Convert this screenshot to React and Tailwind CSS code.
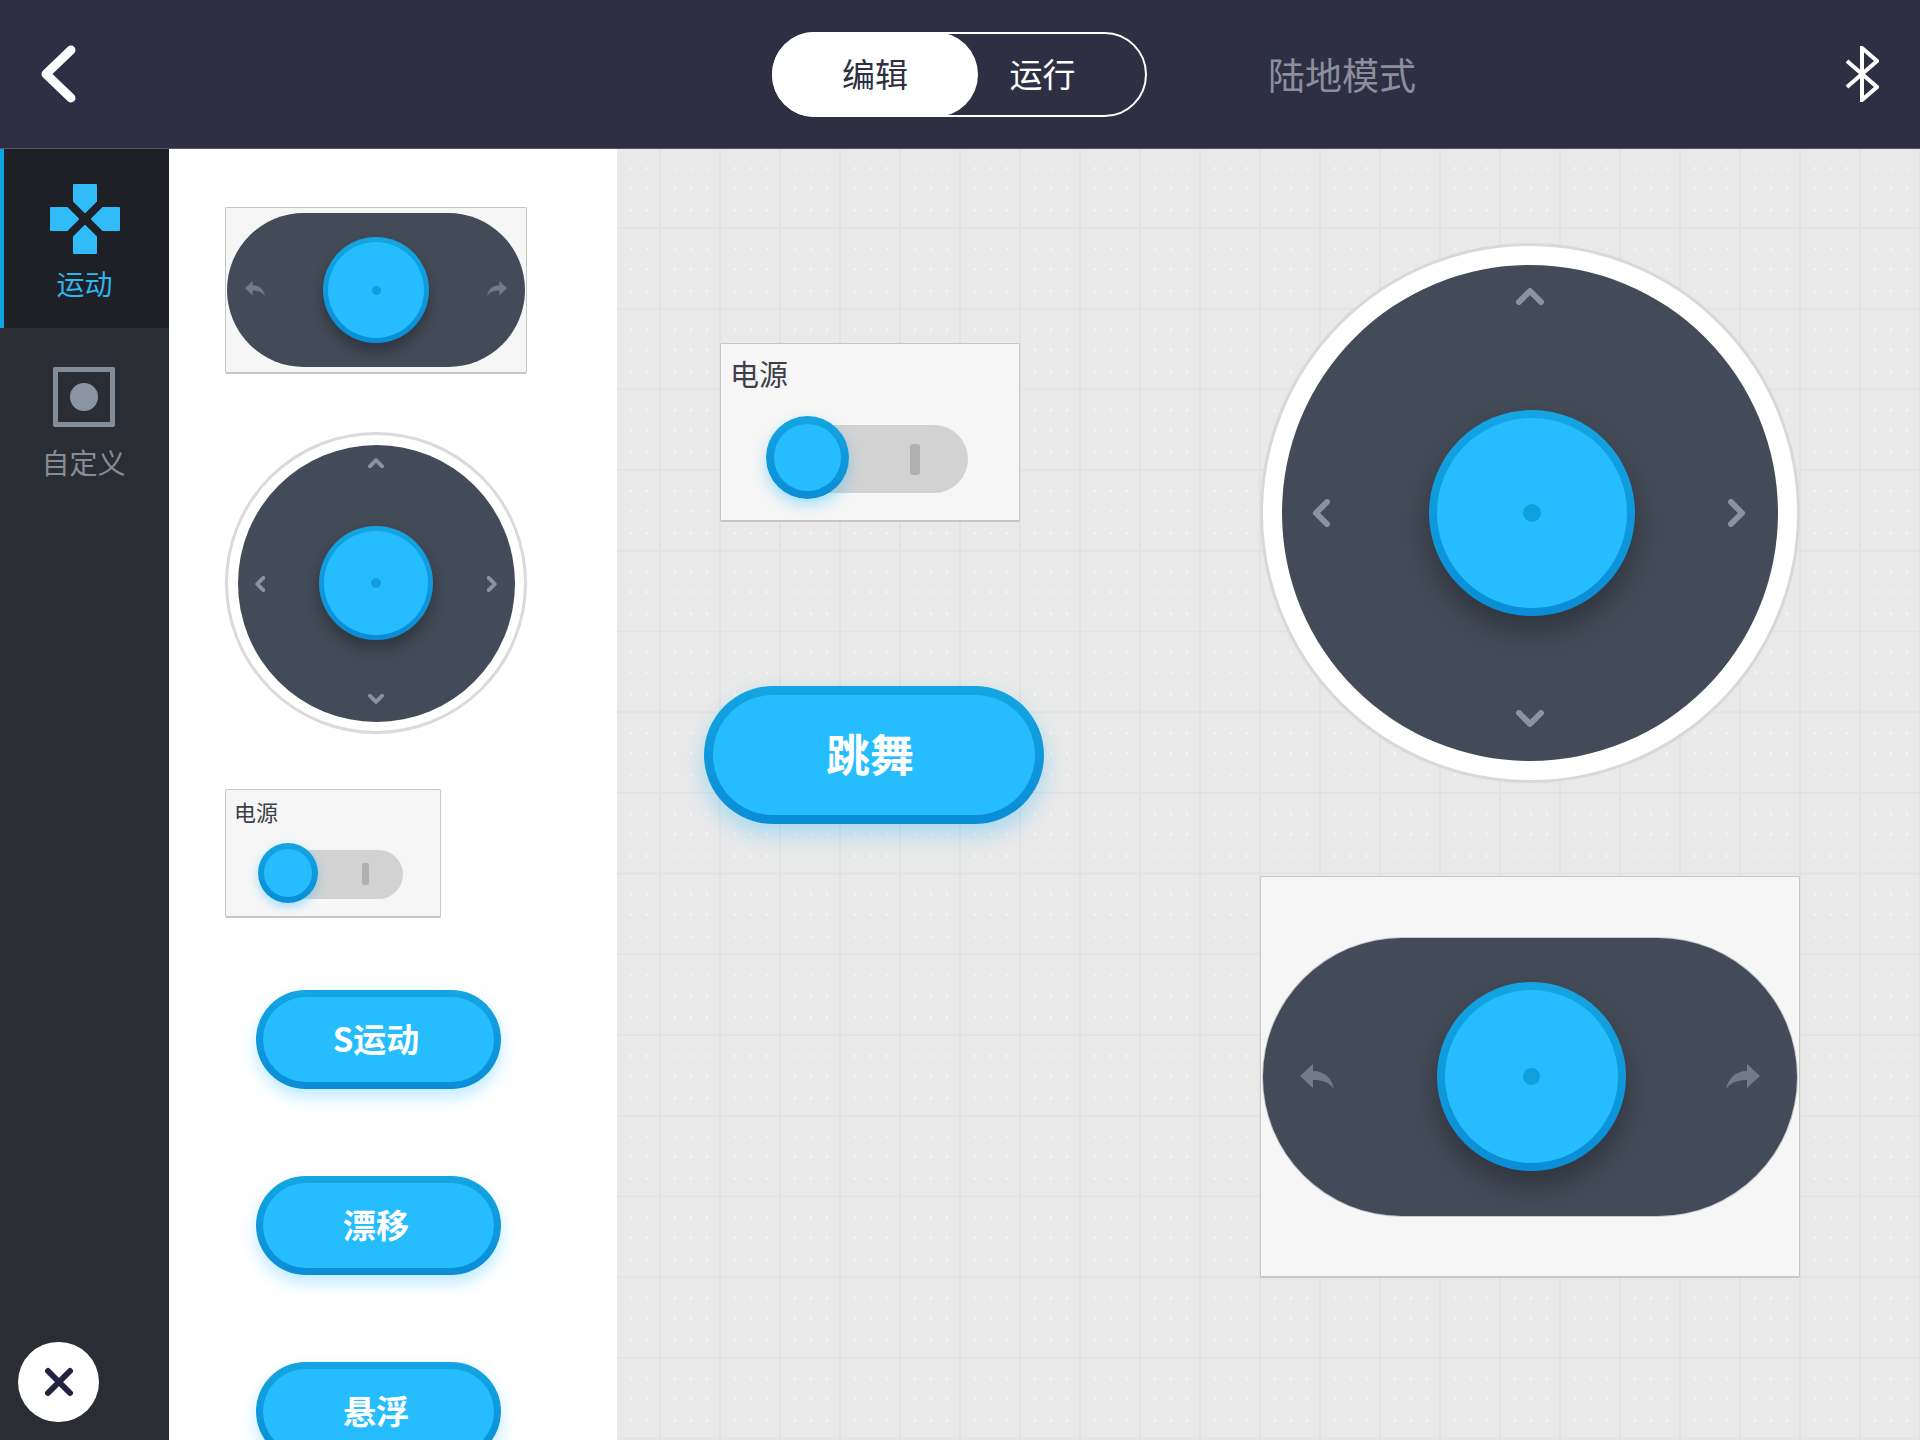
import { useId } from "react";

function Chevron({ dir, className, weight = "6" }) {
  const points = {
    up: "3,15 14,4 25,15",
    down: "3,3 14,14 25,3",
    left: "15,3 4,14 15,25",
    right: "3,3 14,14 3,25",
  };
  const box = dir === "up" || dir === "down" ? "0 0 28 18" : "0 0 18 28";
  return (
    <svg viewBox={box} className={className} fill="none" stroke="#8a93a1" strokeWidth={weight} strokeLinecap="round" strokeLinejoin="round">
      <polyline points={points[dir]} />
    </svg>
  );
}

function TurnArrow({ className }) {
  return (
    <svg viewBox="0 0 34 25" className={className} fill="#737b87">
      <path d="M0 12 L13 0 V7 C25 7 32 15 34 25 C29 18 22 16 13 16 V24 Z" />
    </svg>
  );
}

function Knob({ sizeClass, paddingClass, dotClass, shadowClass }) {
  return (
    <div className={`rounded-full bg-linear-to-b from-[#14a5e2] to-[#0a8dd6] ${sizeClass} ${paddingClass} ${shadowClass}`}>
      <div className="flex h-full w-full items-center justify-center rounded-full bg-[#26bdff]">
        {dotClass && <div className={`rounded-full bg-[#12a0dc] ${dotClass}`} />}
      </div>
    </div>
  );
}

function SmallPill() {
  return (
    <div className="flex h-[167px] w-[302px] shrink-0 items-center justify-center rounded-[2px] border border-b-2 border-[#c6c6c6] bg-[#f6f6f6]">
      <div className="relative flex h-[154px] w-[298px] items-center justify-center rounded-full bg-[#434b58]">
        <TurnArrow className="absolute left-[18px] top-[68px] h-[15px] w-[20px]" />
        <TurnArrow className="absolute right-[18px] top-[68px] h-[15px] w-[20px] -scale-x-100" />
        <Knob sizeClass="h-[106px] w-[106px]" paddingClass="p-[5px]" dotClass="h-[9px] w-[9px]" shadowClass="shadow-[0_8px_14px_rgba(0,0,0,0.3)]" />
      </div>
    </div>
  );
}

function SmallStick() {
  return (
    <div className="mt-[58px] flex h-[302px] w-[302px] shrink-0 items-center justify-center rounded-full border-[3px] border-[#dadadc] bg-white">
      <div className="relative flex h-[277px] w-[277px] items-center justify-center rounded-full bg-[#434b58]">
        <Chevron dir="up" weight="7" className="absolute left-[130px] top-[13px] h-[10px] w-[16px]" />
        <Chevron dir="down" weight="7" className="absolute bottom-[18px] left-[130px] h-[10px] w-[16px]" />
        <Chevron dir="left" weight="7" className="absolute left-[17px] top-[131px] h-[16px] w-[10px]" />
        <Chevron dir="right" weight="7" className="absolute right-[18px] top-[131px] h-[16px] w-[10px]" />
        <Knob sizeClass="h-[114px] w-[114px]" paddingClass="p-[5px]" dotClass="h-[10px] w-[10px]" shadowClass="shadow-[0_8px_16px_rgba(0,0,0,0.3)]" />
      </div>
    </div>
  );
}

function SmallSwitch() {
  return (
    <div className="mt-[55px] h-[129px] w-[216px] shrink-0 rounded-[2px] border border-b-2 border-[#c6c6c6] bg-[#f6f6f6] pl-[8px] pt-[8px]">
      <div className="text-[22px] leading-[26px] text-[#3b4048]">电源</div>
      <div className="ml-[24px] mt-[19px] flex items-center">
        <div className="relative z-10">
          <Knob sizeClass="h-[60px] w-[60px]" paddingClass="p-[6px]" shadowClass="shadow-[0_4px_10px_rgba(38,189,255,0.4)]" />
        </div>
        <div className="-ml-[40px] mt-[2px] flex h-[49px] w-[125px] items-center justify-end rounded-r-full bg-[#d2d2d2] pr-[34px]">
          <div className="h-[22px] w-[7px] rounded-[2px] bg-[#b0b0b0]" />
        </div>
      </div>
    </div>
  );
}

function PillButton({ label }) {
  return (
    <div className="ml-[31px] h-[99px] w-[245px] shrink-0 rounded-full bg-linear-to-b from-[#14a5e2] to-[#0a8dd6] p-[7px] shadow-[0_8px_16px_rgba(38,189,255,0.3)]">
      <div className="flex h-full w-full items-center justify-center rounded-full bg-[#26bdff] pb-[2px] pr-[5px] text-[33px] font-bold text-white">
        {label}
      </div>
    </div>
  );
}

function GridBackground() {
  const id = useId();
  return (
    <svg className="absolute inset-0 h-full w-full">
      <defs>
        <pattern id={id} x="43" y="79" width="60" height="80.7" patternUnits="userSpaceOnUse">
          <rect x="-1" y="0" width="2" height="80.7" fill="#e2e2e2" />
          <rect x="59" y="0" width="2" height="80.7" fill="#e2e2e2" />
          <rect x="0" y="-1" width="60" height="2" fill="#e2e2e2" />
          <rect x="0" y="79.7" width="60" height="2" fill="#e2e2e2" />
          {[15, 31, 47].map((x) =>
            [21, 41, 63].map((y) => <circle key={`${x}-${y}`} cx={x} cy={y} r="1.5" fill="#f3f3f3" />)
          )}
        </pattern>
      </defs>
      <rect width="100%" height="100%" fill={`url(#${id})`} />
    </svg>
  );
}

function DPad() {
  const arm = "-11,-34 11,-34 11,-18 0,-7 -11,-18";
  return (
    <svg viewBox="-36 -36 72 72" className="h-[72px] w-[72px]" fill="#2fbcf8" stroke="#2fbcf8" strokeWidth="2" strokeLinejoin="round">
      {[0, 90, 180, 270].map((r) => (
        <polygon key={r} points={arm} transform={`rotate(${r})`} />
      ))}
    </svg>
  );
}

export default function App() {
  return (
    <div className="flex h-screen w-full flex-col overflow-hidden font-['Noto_Sans_CJK_SC','Noto_Sans',sans-serif]">
      <header className="flex h-[149px] shrink-0 items-center border-b border-[#55566a] bg-[#2e2f42] pl-[41px] pr-[41px]">
        <svg viewBox="0 0 35 58" className="h-[58px] w-[35px]" fill="none" stroke="white" strokeWidth="9" strokeLinecap="round" strokeLinejoin="round">
          <polyline points="30,5 5,29 30,53" />
        </svg>
        <div className="ml-[696px] flex h-[85px] w-[375px] rounded-full border-2 border-white">
          <div className="-m-[2px] flex h-[85px] w-[206px] items-center justify-center rounded-full bg-white text-[33px] text-[#2e2f42]">
            编辑
          </div>
          <div className="flex flex-1 items-center justify-center pr-[36px] text-[33px] text-white">运行</div>
        </div>
        <div className="ml-[121px] mt-[2px] text-[37px] text-[#8b8f9c]">陆地模式</div>
        <svg viewBox="0 0 34 56" className="ml-auto h-[56px] w-[34px]" fill="none" stroke="white" strokeWidth="4" strokeLinejoin="miter">
          <polyline points="2,15 32,41 17,54 17,2 32,15 2,41" />
        </svg>
      </header>

      <div className="flex min-h-0 flex-1">
        <aside className="flex w-[169px] shrink-0 flex-col bg-[#2b2d34]">
          <div className="flex h-[179px] flex-col items-center border-l-4 border-[#0ea5e0] bg-[#1f2025] pr-[4px] pt-[34px]">
            <DPad />
            <div className="mt-[10px] text-[28px] leading-[36px] text-[#2fb6ee]">运动</div>
          </div>
          <div className="mt-[39px] flex flex-col items-center pr-[2px]">
            <div className="flex h-[60px] w-[62px] items-center justify-center rounded-[2px] border-[5px] border-[#838d99]">
              <div className="h-[28px] w-[28px] rounded-full bg-[#8b95a1]" />
            </div>
            <div className="mt-[17px] text-[28px] leading-[36px] text-[#878d97]">自定义</div>
          </div>
          <div className="mb-[18px] ml-[18px] mt-auto flex h-[80px] w-[81px] items-center justify-center rounded-full bg-white">
            <svg viewBox="0 0 30 30" className="h-[30px] w-[30px]" fill="none" stroke="#22233f" strokeWidth="6" strokeLinecap="round">
              <path d="M4 4 L26 26 M26 4 L4 26" />
            </svg>
          </div>
        </aside>

        <section className="flex w-[448px] shrink-0 flex-col overflow-hidden bg-white pl-[56px] pt-[58px]">
          <SmallPill />
          <SmallStick />
          <SmallSwitch />
          <div className="mt-[72px] flex shrink-0 flex-col gap-[87px]">
            <PillButton label="S运动" />
            <PillButton label="漂移" />
            <PillButton label="悬浮" />
          </div>
        </section>

        <main className="relative flex-1 overflow-hidden bg-[#e9e9e9]">
          <GridBackground />

          <div className="absolute left-[103px] top-[194px] h-[179px] w-[300px] rounded-[2px] border border-b-2 border-[#c6c6c6] bg-[#f6f6f6] pl-[9px] pt-[11px]">
            <div className="text-[29px] leading-[36px] text-[#3b4048]">电源</div>
            <div className="ml-[36px] mt-[25px] flex items-center">
              <div className="relative z-10">
                <Knob sizeClass="h-[83px] w-[83px]" paddingClass="p-[8px]" shadowClass="shadow-[0_6px_14px_rgba(38,189,255,0.4)]" />
              </div>
              <div className="-ml-[59px] mt-[3px] flex h-[68px] w-[178px] items-center justify-end rounded-r-full bg-[#d2d2d2] pr-[48px]">
                <div className="h-[31px] w-[10px] rounded-[3px] bg-[#b0b0b0]" />
              </div>
            </div>
          </div>

          <div className="absolute left-[87px] top-[537px] h-[138px] w-[340px] rounded-full bg-linear-to-b from-[#14a5e2] to-[#0a8dd6] p-[9px] shadow-[0_10px_22px_rgba(38,189,255,0.35)]">
            <div className="flex h-full w-full items-center justify-center rounded-full bg-[#26bdff] pb-[4px] pr-[8px] text-[44px] font-bold text-white">
              跳舞
            </div>
          </div>

          <div className="absolute left-[643px] top-[94px] flex h-[540px] w-[540px] items-center justify-center rounded-full border-[3px] border-[#d8d8da] bg-white">
            <div className="relative flex h-[496px] w-[496px] items-center justify-center rounded-full bg-[#434b58]">
              <Chevron dir="up" className="absolute left-[234px] top-[22px] h-[18px] w-[28px]" />
              <Chevron dir="down" className="absolute bottom-[33px] left-[234px] h-[18px] w-[28px]" />
              <Chevron dir="left" className="absolute left-[30px] top-[234px] h-[28px] w-[18px]" />
              <Chevron dir="right" className="absolute right-[32px] top-[234px] h-[28px] w-[18px]" />
              <Knob sizeClass="ml-[3px] h-[206px] w-[206px]" paddingClass="p-[8px]" dotClass="h-[18px] w-[18px]" shadowClass="shadow-[0_14px_28px_rgba(0,0,0,0.3)]" />
            </div>
          </div>

          <div className="absolute left-[643px] top-[727px] flex h-[402px] w-[540px] items-center justify-center rounded-[2px] border border-b-2 border-[#c6c6c6] bg-[#f6f6f6]">
            <div className="relative flex h-[278px] w-[534px] items-center justify-center rounded-full bg-[#434b58] ring-1 ring-[#c8cad0]">
              <TurnArrow className="absolute left-[37px] top-[126px] h-[25px] w-[34px]" />
              <TurnArrow className="absolute right-[37px] top-[126px] h-[25px] w-[34px] -scale-x-100" />
              <Knob sizeClass="ml-[2px] h-[189px] w-[189px]" paddingClass="p-[8px]" dotClass="h-[17px] w-[17px]" shadowClass="shadow-[0_14px_26px_rgba(0,0,0,0.3)]" />
            </div>
          </div>
        </main>
      </div>
    </div>
  );
}
